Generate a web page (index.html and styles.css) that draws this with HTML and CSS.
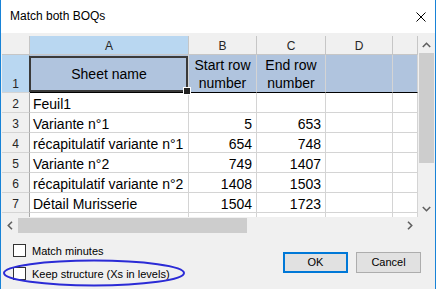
FILE: index.html
```html
<!DOCTYPE html>
<html lang="en">
<head>
    <meta charset="UTF-8">
    <title>Match both BOQs</title>
    <link rel="stylesheet" href="styles.css">
</head>
<body>
    <div class="window">
        <div class="titlebar">
            <span class="title">Match both BOQs</span>
            <svg class="close" width="10" height="10" viewBox="0 0 10 10">
                <path d="M0.5 0.5 L9.5 9.5 M9.5 0.5 L0.5 9.5" stroke="#000" stroke-width="1" fill="none"/>
            </svg>
        </div>

        <div class="sheet">
            <div class="sheet-main">
                <div class="cells">
                    <!-- column headers -->
                    <div class="hd"></div>
                    <div class="hd active">A</div>
                    <div class="hd">B</div>
                    <div class="hd">C</div>
                    <div class="hd">D</div>
                    <div class="hd"></div>

                    <!-- row 1 -->
                    <div class="rh active">1</div>
                    <div class="c head sel">Sheet name</div>
                    <div class="c head">Start row number</div>
                    <div class="c head">End row number</div>
                    <div class="c head"></div>
                    <div class="c head"></div>

                    <div class="rh">2</div>
                    <div class="c">Feuil1</div>
                    <div class="c num"></div>
                    <div class="c num"></div>
                    <div class="c"></div>
                    <div class="c"></div>

                    <div class="rh">3</div>
                    <div class="c">Variante n°1</div>
                    <div class="c num">5</div>
                    <div class="c num">653</div>
                    <div class="c"></div>
                    <div class="c"></div>

                    <div class="rh">4</div>
                    <div class="c">récapitulatif variante n°1</div>
                    <div class="c num">654</div>
                    <div class="c num">748</div>
                    <div class="c"></div>
                    <div class="c"></div>

                    <div class="rh">5</div>
                    <div class="c">Variante n°2</div>
                    <div class="c num">749</div>
                    <div class="c num">1407</div>
                    <div class="c"></div>
                    <div class="c"></div>

                    <div class="rh">6</div>
                    <div class="c">récapitulatif variante n°2</div>
                    <div class="c num">1408</div>
                    <div class="c num">1503</div>
                    <div class="c"></div>
                    <div class="c"></div>

                    <div class="rh">7</div>
                    <div class="c">Détail Murisserie</div>
                    <div class="c num">1504</div>
                    <div class="c num">1723</div>
                    <div class="c"></div>
                    <div class="c"></div>

                    <!-- partly visible row, cut by the scrollbar -->
                    <div class="rh"></div>
                    <div class="c"></div>
                    <div class="c"></div>
                    <div class="c"></div>
                    <div class="c"></div>
                    <div class="c"></div>
                </div>

                <div class="vscroll">
                    <div class="arrow">
                        <svg width="9" height="6" viewBox="0 0 9 6"><path d="M0.8 5 L4.5 1.3 L8.2 5" stroke="#606060" stroke-width="1.6" fill="none"/></svg>
                    </div>
                    <div class="vthumb"></div>
                    <div class="track"></div>
                    <div class="arrow">
                        <svg width="9" height="6" viewBox="0 0 9 6"><path d="M0.8 1 L4.5 4.7 L8.2 1" stroke="#606060" stroke-width="1.6" fill="none"/></svg>
                    </div>
                </div>
            </div>

            <div class="hscroll-row">
                <div class="hscroll">
                    <div class="harrow">
                        <svg width="6" height="9" viewBox="0 0 6 9"><path d="M5 0.8 L1.3 4.5 L5 8.2" stroke="#606060" stroke-width="1.6" fill="none"/></svg>
                    </div>
                    <div class="hthumb"></div>
                    <div class="track"></div>
                    <div class="harrow">
                        <svg width="6" height="9" viewBox="0 0 6 9"><path d="M1 0.8 L4.7 4.5 L1 8.2" stroke="#606060" stroke-width="1.6" fill="none"/></svg>
                    </div>
                </div>
                <div class="corner"></div>
            </div>
        </div>

        <div class="footer">
            <div class="options">
                <label class="check"><span class="box"></span>Match minutes</label>
                <label class="check"><span class="box"></span>Keep structure (Xs in levels)</label>
            </div>
            <div class="buttons">
                <button class="btn default">OK</button>
                <button class="btn">Cancel</button>
            </div>
        </div>

        <!-- hand-drawn highlight around the second option -->
        <svg class="circle" width="184" height="28" viewBox="0 0 184 28">
            <ellipse cx="92" cy="14" rx="90" ry="12.5" stroke="#2b2bd6" stroke-width="2" fill="none"/>
        </svg>
    </div>
</body>
</html>
```

FILE: styles.css
```css
* {
    box-sizing: border-box;
}

body {
    margin: 0;
    background-color: #fff;
    font-family: 'Liberation Sans', Arial, sans-serif;
    overflow: hidden;
}

/* Window */
.window {
    position: relative;
    width: 436px;
    height: 289px;
    border-left: 1px solid #1883d7;
    border-right: 1px solid #1883d7;
    background-color: #f0f0f0;
    display: flex;
    flex-direction: column;
}

.titlebar {
    height: 33px;
    flex-shrink: 0;
    background-color: #fff;
    display: flex;
    align-items: center;
    justify-content: space-between;
    padding: 0 9px;
}

.title {
    font-size: 12px;
    line-height: 33px;
    color: #000;
}

/* Sheet */
.sheet {
    margin: 3px 0 0 1px;
    width: 432px;
    background-color: #fff;
}

.sheet-main {
    display: flex;
    height: 181px;
}

.cells {
    width: 416px;
    display: grid;
    grid-template-columns: 28px 159px 68px 69px 67px 25px;
    grid-template-rows: 19px 38px repeat(7, 20px);
    overflow: hidden;
}

.hd {
    background-color: #f0f0f0;
    border-right: 1px solid #c6c6c6;
    border-bottom: 1px solid #c6c6c6;
    font-size: 12px;
    line-height: 15px;
    color: #262626;
    display: flex;
    align-items: flex-end;
    justify-content: center;
}

.rh {
    background-color: #f0f0f0;
    border-right: 1px solid #a9a9a9;
    border-bottom: 1px solid #d4d4d4;
    font-size: 12px;
    line-height: 16px;
    color: #262626;
    display: flex;
    align-items: flex-end;
    justify-content: center;
}

.active {
    background-color: #b9d7f1;
}

.c {
    border-right: 1px solid #d4d4d4;
    border-bottom: 1px solid #d4d4d4;
    font-size: 14px;
    line-height: 16px;
    color: #000;
    padding: 0 3px;
    display: flex;
    align-items: flex-end;
    white-space: nowrap;
    overflow: hidden;
}

.num {
    justify-content: flex-end;
    padding-right: 4px;
}

.c.head {
    background-color: #b0c4de;
    border-bottom: 1px solid #000;
    white-space: normal;
    text-align: center;
    justify-content: center;
    align-items: center;
    line-height: 18px;
    padding: 0 2px;
}

.sel {
    position: relative;
    overflow: visible;
    z-index: 2;
}

.sel::before {
    content: "";
    position: absolute;
    left: -1px;
    right: 0;
    top: 1px;
    bottom: 0;
    border: 2px solid #3a3a3a;
}

.sel::after {
    content: "";
    position: absolute;
    right: -3px;
    bottom: -3px;
    width: 6px;
    height: 6px;
    background-color: #222;
    border: 1px solid #fff;
}

/* Scrollbars */
.vscroll {
    width: 16px;
    background-color: #f0f0f0;
    display: flex;
    flex-direction: column;
}

.arrow {
    height: 17px;
    display: flex;
    align-items: center;
    justify-content: center;
}

.vthumb {
    height: 110px;
    width: 15px;
    margin-left: 1px;
    background-color: #cdcdcd;
}

.track {
    flex: 1;
}

.hscroll-row {
    display: flex;
    height: 16px;
}

.hscroll {
    width: 416px;
    display: flex;
    background-color: #f0f0f0;
}

.harrow {
    width: 16px;
    display: flex;
    align-items: center;
    justify-content: center;
}

.hthumb {
    width: 229px;
    height: 15px;
    margin-top: 1px;
    background-color: #cdcdcd;
}

.corner {
    width: 16px;
    background-color: #f0f0f0;
}

/* Footer */
.footer {
    display: flex;
    align-items: center;
    padding: 11px 14px 0 12px;
}

.options {
    display: flex;
    flex-direction: column;
    gap: 10px;
}

.check {
    display: flex;
    align-items: center;
    gap: 6px;
    height: 13px;
    font-size: 11px;
    color: #000;
}

.box {
    width: 13px;
    height: 13px;
    border: 1px solid #333;
    background-color: #fff;
}

.buttons {
    margin-left: auto;
    display: flex;
    gap: 8px;
}

.btn {
    width: 65px;
    height: 21px;
    padding: 0;
    font-family: 'Liberation Sans', Arial, sans-serif;
    font-size: 11px;
    color: #000;
    background-color: #e1e1e1;
    border: 1px solid #adadad;
}

.btn.default {
    border: 2px solid #0078d7;
}

.circle {
    position: absolute;
    left: 1px;
    top: 259px;
}
```
